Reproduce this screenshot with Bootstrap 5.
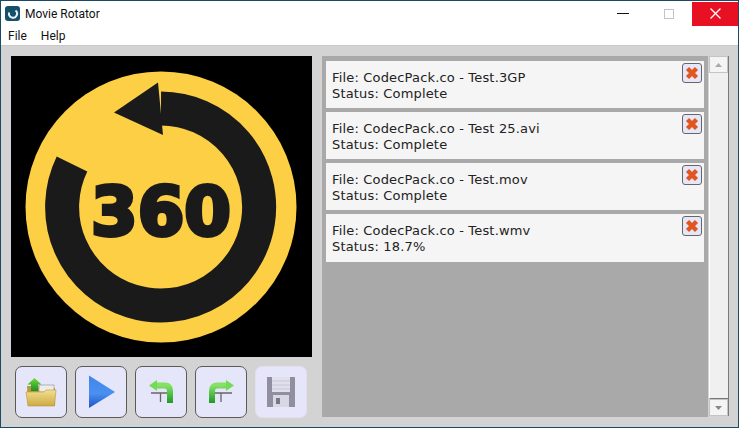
<!DOCTYPE html>
<html lang="en">
<head>
    <meta charset="UTF-8">
    <title>Movie Rotator</title>
    <link href="https://cdn.jsdelivr.net/npm/bootstrap@5.3.0/dist/css/bootstrap.min.css" rel="stylesheet">
    <style>
        html, body { margin: 0; height: 100%; overflow: hidden; background: #d3d3d3; }
        .app-window { width: 739px; height: 428px; border: 1px solid #1c4a63; font-family: Roboto, "Noto Sans", sans-serif; color: #111; }
        .title-bar { height: 25px; background: #fff; font-size: 12px; padding-left: 4px; }
        .title-text { margin-left: 5px; }
        .win-ctl { width: 46px; height: 24px; }
        .win-close { background: #e81123; }
        .menu-strip { height: 19px; background: #fff; font-size: 12px; padding-left: 7px; gap: 14px; }
        .work-area { background: #d3d3d3; padding: 10px 9px 0 10px; min-height: 0; flex: 1 1 auto; border-top: 1px solid #c8c8c8; }
        .left-col { width: 301px; }
        .preview-box { width: 301px; height: 301px; background: #000; }
        .tool-row { padding: 9px 0 0 4px; gap: 8px; }
        .tool-btn { width: 52px; height: 52px; padding: 0; background: #e6e6fa; border: 1px solid #5a5a5a; border-radius: 7px; line-height: 0; }
        .tool-btn:disabled { background: #e6e6fa; border-color: #e0e0ef; opacity: 1; }
        .queue-pane { width: 386px; height: 361px; margin-left: 10px; background: #a9a9a9; padding: 5px 4px 0 4px; gap: 4px; border-radius: 0; }
        .list-group-item.queue-item { background: #f5f5f5; border: 0; border-radius: 0; padding: 0; height: 47px; font-family: "DejaVu Sans", sans-serif; font-size: 13px; letter-spacing: .17px; line-height: 16px; color: #222; }
        .list-group-item.queue-item:last-child { height: 48px; }
        .queue-text { padding: 9px 0 0 6px; }
        .del-btn { width: 20px; height: 20px; padding: 0; margin: 2px 2px 0 0; background: #e6e6fa; border: 1px solid #666; border-radius: 3px; line-height: 0; }
        .scroll-track { width: 20px; height: 360px; margin-left: 1px; background: #f0f0f0; border-right: 1px solid #7a7a7a; }
        .scroll-btn { height: 17px; background: #f4f4f4; border: 1px solid #c4c4c4; }
        .scroll-fill { flex: 1 1 auto; background: #f0f0f0; border-left: 1px solid #fff; border-bottom: 1px solid #777; }
    </style>
</head>
<body>
<div class="app-window d-flex flex-column">
    <div class="title-bar d-flex align-items-center flex-shrink-0">
        <svg width="15" height="15" viewBox="0 0 15 15">
            <rect width="15" height="15" rx="3" fill="#15506a"/>
            <path d="M10.5 4.5 A4 4 0 1 1 4.2 6.5" fill="none" stroke="#e8f2f6" stroke-width="2"/>
        </svg>
        <span class="title-text">Movie Rotator</span>
        <div class="ms-auto d-flex">
            <div class="win-ctl d-flex align-items-center justify-content-center">
                <svg width="12" height="2"><rect width="12" height="1" fill="#111"/></svg>
            </div>
            <div class="win-ctl d-flex align-items-center justify-content-center">
                <svg width="10" height="10"><rect x=".5" y=".5" width="9" height="9" fill="none" stroke="#c4c4c4"/></svg>
            </div>
            <div class="win-ctl win-close d-flex align-items-center justify-content-center">
                <svg width="11" height="11"><path d="M.5 .5 L10.5 10.5 M10.5 .5 L.5 10.5" stroke="#fff" stroke-width="1.3"/></svg>
            </div>
        </div>
    </div>
    <div class="menu-strip d-flex align-items-center flex-shrink-0">
        <span>File</span>
        <span>Help</span>
    </div>
    <div class="work-area d-flex align-items-start">
        <div class="left-col d-flex flex-column">
            <div class="preview-box">
                <svg width="301" height="301" viewBox="0 0 301 301">
                    <circle cx="150" cy="151" r="135.5" fill="#fdcf45"/>
                    <path d="M61 108 A98.5 98.5 0 1 0 150 52.5" fill="none" stroke="#1a1a1a" stroke-width="34"/>
                    <polygon points="103,56.5 147,26.5 152,79" fill="#1a1a1a"/>
                    <text x="150" y="179" text-anchor="middle" font-family="DejaVu Sans" font-weight="700" font-size="67" fill="#1a1a1a" stroke="#1a1a1a" stroke-width="4">360</text>
                </svg>
            </div>
            <div class="tool-row d-flex">
                <button class="btn tool-btn" type="button" aria-label="Open">
                    <svg width="50" height="50" viewBox="0 0 50 50">
                        <defs>
                            <linearGradient id="fold" x1="0" y1="0" x2="0" y2="1"><stop offset="0" stop-color="#f3e08e"/><stop offset="1" stop-color="#cda945"/></linearGradient>
                            <linearGradient id="upg" x1="0" y1="0" x2="0" y2="1"><stop offset="0" stop-color="#6fdc3e"/><stop offset="1" stop-color="#1f8f22"/></linearGradient>
                        </defs>
                        <path d="M11 19 H24 L26 21 H39 V39 H12 Z" fill="#bb9a3e"/>
                        <rect x="23" y="18" width="15" height="7" fill="#ececec" stroke="#9a9a9a" stroke-width=".7"/>
                        <path d="M10 25 H28 L30 23 H40 L38.5 39 H12 Z" fill="url(#fold)" stroke="#b8963c" stroke-width=".6"/>
                        <path d="M18.5 11 L25.5 17.5 H22 V24 H15 V17.5 H11.5 Z" fill="url(#upg)"/>
                    </svg>
                </button>
                <button class="btn tool-btn" type="button" aria-label="Play">
                    <svg width="50" height="50" viewBox="0 0 50 50">
                        <defs><linearGradient id="plg" x1="0" y1="0" x2="0" y2="1"><stop offset="0" stop-color="#3f86ec"/><stop offset=".55" stop-color="#4b90f0"/><stop offset="1" stop-color="#1e52c8"/></linearGradient></defs>
                        <polygon points="13,8.5 39,25 13,41" fill="url(#plg)"/>
                    </svg>
                </button>
                <button class="btn tool-btn" type="button" aria-label="Rotate left">
                    <svg width="50" height="50" viewBox="0 0 50 50">
                        <defs><linearGradient id="turn" x1="0" y1="0" x2="0" y2="1"><stop offset="0" stop-color="#85e265"/><stop offset="1" stop-color="#1c9a2a"/></linearGradient></defs>
                        <path d="M15 26 H31 M24.5 26 V35" stroke="#666" stroke-width="1.3" fill="none"/>
                        <path d="M20 18.5 H29 Q34 18.5 34 24 V36" fill="none" stroke="url(#turn)" stroke-width="6"/>
                        <polygon points="13,18.5 21,13 21,24" fill="#74db58"/>
                    </svg>
                </button>
                <button class="btn tool-btn" type="button" aria-label="Rotate right">
                    <svg width="50" height="50" viewBox="0 0 50 50">
                        <path d="M19 26 H36 M25 26 V35" stroke="#666" stroke-width="1.3" fill="none"/>
                        <path d="M31 18.5 H21 Q16 18.5 16 24 V36" fill="none" stroke="url(#turn)" stroke-width="6"/>
                        <polygon points="38,18.5 30,13 30,24" fill="#74db58"/>
                    </svg>
                </button>
                <button class="btn tool-btn" type="button" aria-label="Save" disabled>
                    <svg width="50" height="50" viewBox="0 0 50 50">
                        <path d="M11 10 H39 V40 H11 Z" fill="#8f8fa0"/>
                        <rect x="16" y="10" width="18" height="15" fill="#e0e0ec"/>
                        <path d="M16 14 H34 M16 18 H34 M16 22 H34" stroke="#c8c8d6" stroke-width="1"/>
                        <rect x="17" y="28" width="16" height="12" fill="#d8d8e4"/>
                        <rect x="20" y="31" width="4" height="6" fill="#77778a"/>
                    </svg>
                </button>
            </div>
        </div>
        <div class="queue-pane list-group flex-grow-0">
            <div class="list-group-item queue-item d-flex justify-content-between">
                <div class="queue-text">File: CodecPack.co - Test.3GP<br>Status: Complete</div>
                <button class="btn del-btn" type="button" aria-label="Remove"><svg width="18" height="18" viewBox="0 0 18 18"><path d="M4.5 4.5 L13.5 13.5 M13.5 4.5 L4.5 13.5" stroke="#e0561c" stroke-width="4.4"/></svg></button>
            </div>
            <div class="list-group-item queue-item d-flex justify-content-between">
                <div class="queue-text">File: CodecPack.co - Test 25.avi<br>Status: Complete</div>
                <button class="btn del-btn" type="button" aria-label="Remove"><svg width="18" height="18" viewBox="0 0 18 18"><path d="M4.5 4.5 L13.5 13.5 M13.5 4.5 L4.5 13.5" stroke="#e0561c" stroke-width="4.4"/></svg></button>
            </div>
            <div class="list-group-item queue-item d-flex justify-content-between">
                <div class="queue-text">File: CodecPack.co - Test.mov<br>Status: Complete</div>
                <button class="btn del-btn" type="button" aria-label="Remove"><svg width="18" height="18" viewBox="0 0 18 18"><path d="M4.5 4.5 L13.5 13.5 M13.5 4.5 L4.5 13.5" stroke="#e0561c" stroke-width="4.4"/></svg></button>
            </div>
            <div class="list-group-item queue-item d-flex justify-content-between">
                <div class="queue-text">File: CodecPack.co - Test.wmv<br>Status: 18.7%</div>
                <button class="btn del-btn" type="button" aria-label="Remove"><svg width="18" height="18" viewBox="0 0 18 18"><path d="M4.5 4.5 L13.5 13.5 M13.5 4.5 L4.5 13.5" stroke="#e0561c" stroke-width="4.4"/></svg></button>
            </div>
        </div>
        <div class="scroll-track d-flex flex-column">
            <div class="scroll-btn d-flex align-items-center justify-content-center"><svg width="7" height="4"><polygon points="3.5,0 7,4 0,4" fill="#aaa"/></svg></div>
            <div class="scroll-fill"></div>
            <div class="scroll-btn d-flex align-items-center justify-content-center"><svg width="7" height="4"><polygon points="3.5,4 7,0 0,0" fill="#888"/></svg></div>
        </div>
    </div>
</div>
<script src="https://cdn.jsdelivr.net/npm/bootstrap@5.3.0/dist/js/bootstrap.bundle.min.js"></script>
</body>
</html>
